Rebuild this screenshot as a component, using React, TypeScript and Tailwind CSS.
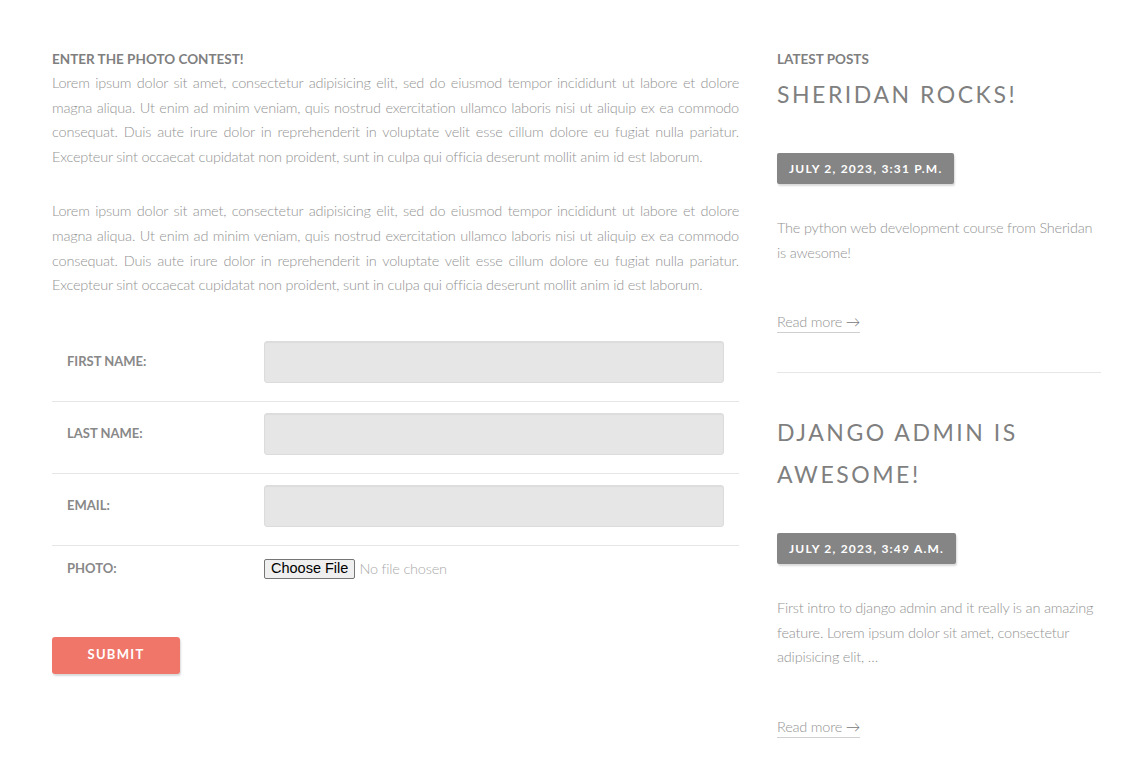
import React from "react";

const posts = [
  {
    title: "Sheridan Rocks!",
    date: "July 2, 2023, 3:31 p.m.",
    body: "The python web development course from Sheridan is awesome!",
  },
  {
    title: "Django admin is awesome!",
    date: "July 2, 2023, 3:49 a.m.",
    body: "First intro to django admin and it really is an amazing feature. Lorem ipsum dolor sit amet, consectetur adipisicing elit, …",
  },
];

const lorem =
  "Lorem ipsum dolor sit amet, consectetur adipisicing elit, sed do eiusmod tempor incididunt ut labore et dolore magna aliqua. Ut enim ad minim veniam, quis nostrud exercitation ullamco laboris nisi ut aliquip ex ea commodo consequat. Duis aute irure dolor in reprehenderit in voluptate velit esse cillum dolore eu fugiat nulla pariatur. Excepteur sint occaecat cupidatat non proident, sunt in culpa qui officia deserunt mollit anim id est laborum.";

function FieldRow({ label, last }: { label: string; last?: boolean }) {
  return (
    <div
      className={`flex items-start pt-[11px] pb-[18px] ${
        last ? "" : "border-b border-[#e6e6e6]"
      }`}
    >
      <label className="w-[212px] shrink-0 pl-[15px] h-[42px] flex items-center text-[13px] font-bold uppercase text-[#888]">
        {label}
      </label>
      <input
        type="text"
        className="w-[460px] h-[42px] rounded-[3px] bg-[#e6e6e6] border border-[#dcdcdc] shadow-[inset_0_1px_1px_rgba(0,0,0,0.04)]"
      />
    </div>
  );
}

export default function App() {
  return (
    <div className="min-h-screen bg-white font-['Lato',sans-serif] font-light text-[#939393]">
      <div className="flex gap-[38px] pl-[52px] pr-[21px] pt-[50px] pb-10">
        {/* Contest form */}
        <div className="w-[687px] shrink-0">
          <h4 className="mb-[3px] text-[13.5px] font-bold uppercase text-[#7f7f7f] leading-[18px]">
            Enter the photo contest!
          </h4>
          <p className="text-[14.5px] leading-[24.6px] tracking-[-0.2px] text-justify">{lorem}</p>
          <p className="mt-[30px] text-[14.5px] leading-[24.6px] tracking-[-0.2px] text-justify">
            {lorem}
          </p>

          <form className="mt-[32px]" onSubmit={(e) => e.preventDefault()}>
            <FieldRow label="First name:" />
            <FieldRow label="Last name:" />
            <FieldRow label="Email:" />
            <div className="flex items-center pt-[12px]">
              <label className="w-[212px] shrink-0 pl-[15px] text-[13px] font-bold uppercase text-[#888]">
                Photo:
              </label>
              <div className="flex items-center">
                <span className="h-[20px] px-[6px] flex items-center border border-[#767676] rounded-[2px] bg-[#efefef] font-['Liberation_Sans',sans-serif] font-normal text-[14.5px] text-black">
                  Choose File
                </span>
                <span className="ml-[4px] text-[14.5px] tracking-[-0.2px] text-[#aaa]">
                  No file chosen
                </span>
              </div>
            </div>

            <button
              type="submit"
              className="mt-[57px] w-[128px] h-[37px] rounded-[3px] bg-[#ef7669] text-white text-[13px] font-bold uppercase tracking-[0.1em] shadow-[1px_2px_2px_rgba(0,0,0,0.15)]"
            >
              Submit
            </button>
          </form>
        </div>

        {/* Latest posts */}
        <div className="w-[324px] shrink-0">
          <h4 className="text-[13.5px] font-bold uppercase text-[#7f7f7f] leading-[18px]">
            Latest posts
          </h4>
          {posts.map((p, i) => (
            <article
              key={p.title}
              className={i > 0 ? "pt-[33px]" : "pb-[39px] border-b border-[#e6e6e6]"}
            >
              <h2 className="mt-[5px] text-[23px] font-normal uppercase tracking-[0.11em] leading-[42px] text-[#7f7f7f]">
                {p.title}
              </h2>
              <div className="mt-[38px] inline-block h-[31px] px-[12px] leading-[31px] rounded-[2px] bg-[#858585] text-white text-[12px] font-bold uppercase tracking-[0.1em] shadow-[1px_2px_2px_rgba(0,0,0,0.15)]">
                {p.date}
              </div>
              <p className="mt-[32px] text-[14.5px] leading-[24.6px] tracking-[-0.2px]">{p.body}</p>
              <a
                href="#"
                className="mt-[47px] inline-block text-[14.5px] leading-[20px] tracking-[-0.2px] text-[#939393] border-b border-[#cfcfcf]"
              >
                Read more <span className="text-[#777]">→</span>
              </a>
            </article>
          ))}
        </div>
      </div>
    </div>
  );
}
